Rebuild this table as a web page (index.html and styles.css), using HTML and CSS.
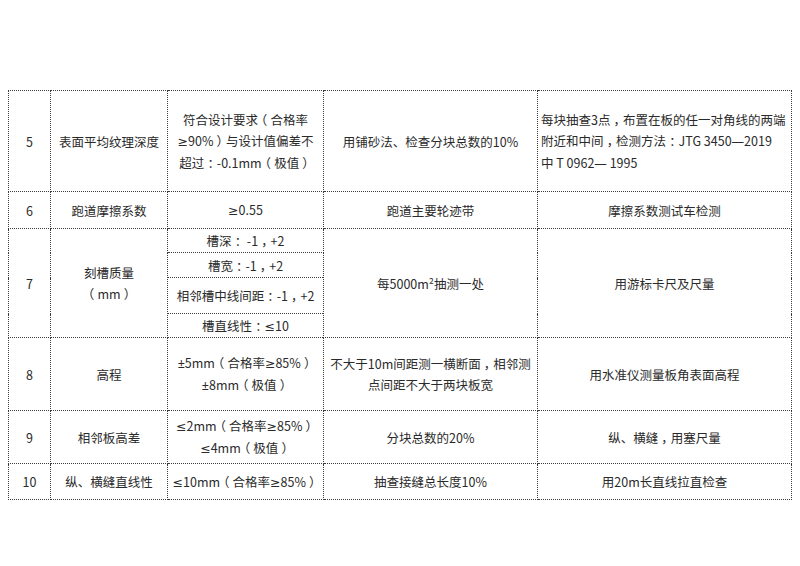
FILE: index.html
```html
<!DOCTYPE html>
<html lang="zh">
<head>
<meta charset="utf-8">
<link rel="stylesheet" href="styles.css">
</head>
<body>
<div class="page">
<table class="spec">
  <colgroup>
    <col class="c1"><col class="c2"><col class="c3"><col class="c4"><col class="c5">
  </colgroup>
  <tr class="r5">
    <td>5</td>
    <td>表面平均纹理深度</td>
    <td>符合设计要求<span class="pu">（</span>合格率<br><span class="sym">≥</span>90%<span class="pu">）</span>与设计值偏差不<br>超过<span class="pu">：</span>-0.1mm<span class="pu">（</span>极值<span class="pu">）</span></td>
    <td>用铺砂法、检查分块总数的10%</td>
    <td class="left">每块抽查3点<span class="pu">，</span>布置在板的任一对角线的两端<br>附近和中间<span class="pu">，</span>检测方法<span class="pu">：</span>JTG 3450<span class="sym">—</span>2019<br>中 T 0962<span class="sym">—</span> 1995</td>
  </tr>
  <tr class="r6">
    <td>6</td>
    <td>跑道摩擦系数</td>
    <td><span class="sym">≥</span>0.55</td>
    <td>跑道主要轮迹带</td>
    <td>摩擦系数测试车检测</td>
  </tr>
  <tr class="r7a">
    <td rowspan="4">7</td>
    <td rowspan="4">刻槽质量<br><span class="pu">（</span>mm<span class="pu">）</span></td>
    <td>槽深<span class="pu">：</span> -1<span class="pu">，</span>+2</td>
    <td rowspan="4">每5000m²抽测一处</td>
    <td rowspan="4">用游标卡尺及尺量</td>
  </tr>
  <tr class="r7b"><td>槽宽<span class="pu">：</span>-1<span class="pu">，</span>+2</td></tr>
  <tr class="r7c"><td>相邻槽中线间距<span class="pu">：</span>-1<span class="pu">，</span>+2</td></tr>
  <tr class="r7d"><td>槽直线性<span class="pu">：</span><span class="sym">≤</span>10</td></tr>
  <tr class="r8">
    <td>8</td>
    <td>高程</td>
    <td><span class="sym">±</span>5mm<span class="pu">（</span>合格率<span class="sym">≥</span>85%<span class="pu">）</span><br><span class="sym">±</span>8mm<span class="pu">（</span>极值<span class="pu">）</span></td>
    <td>不大于10m间距测一横断面<span class="pu">，</span>相邻测<br>点间距不大于两块板宽</td>
    <td>用水准仪测量板角表面高程</td>
  </tr>
  <tr class="r9">
    <td>9</td>
    <td>相邻板高差</td>
    <td><span class="sym">≤</span>2mm<span class="pu">（</span>合格率<span class="sym">≥</span>85%<span class="pu">）</span><br><span class="sym">≤</span>4mm<span class="pu">（</span>极值<span class="pu">）</span></td>
    <td>分块总数的20%</td>
    <td>纵、横缝<span class="pu">，</span>用塞尺量</td>
  </tr>
  <tr class="r10">
    <td>10</td>
    <td>纵、横缝直线性</td>
    <td><span class="sym">≤</span>10mm<span class="pu">（</span>合格率<span class="sym">≥</span>85%<span class="pu">）</span></td>
    <td>抽查接缝总长度10%</td>
    <td>用20m长直线拉直检查</td>
  </tr>
</table>
</div>
</body>
</html>
```

FILE: styles.css
```css
html, body {
  margin: 0;
  padding: 0;
  background: #ffffff;
}
.page {
  padding: 90px 0 0 8px;
}
.spec {
  border-collapse: collapse;
  table-layout: fixed;
  width: 784px;
  font-family: "Noto Sans CJK SC", "Microsoft YaHei", sans-serif;
  font-size: 12.5px;
  line-height: 21px;
  color: #2a2a2a;
}
.c1 { width: 42px; }
.c2 { width: 117px; }
.c3 { width: 156px; }
.c4 { width: 214px; }
.c5 { width: 254px; }
.spec td {
  border: 1px dotted #3a3a3a;
  padding: 0;
  text-align: center;
  vertical-align: middle;
  white-space: nowrap;
  overflow: hidden;
}
.spec td.left {
  text-align: left;
  padding-left: 3px;
}
.pu {
  font-feature-settings: "halt" 1;
  padding: 0 0.25em;
}
.sym {
  font-family: "Noto Sans", "DejaVu Sans", sans-serif;
}
.r5 { height: 101px; }
.r6 { height: 37px; }
.r7a { height: 24px; }
.r7b { height: 25px; }
.r7c { height: 36px; }
.r7d { height: 24px; }
.r8 { height: 73px; }
.r9 { height: 53px; }
.r10 { height: 36px; }
```
